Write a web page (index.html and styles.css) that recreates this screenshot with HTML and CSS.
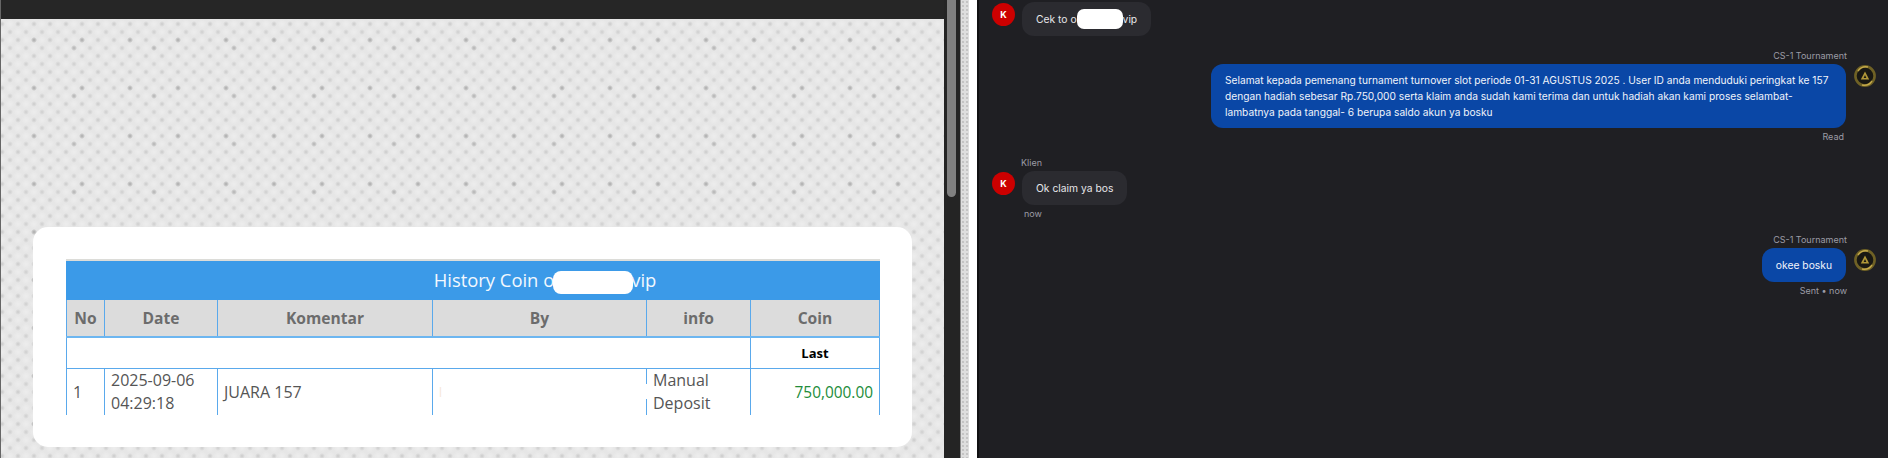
FILE: index.html
```html
<!DOCTYPE html>
<html lang="en">
<head>
  <meta charset="UTF-8" />
  <title>History Coin</title>
  <link rel="stylesheet" href="styles.css">
</head>
<body>
  <div class="page">
    <section class="left-pane">
      <div class="topbar"></div>
      <div class="card">
        <div class="table-wrap">
          <table class="coin-table">
            <colgroup>
              <col class="col-no"><col class="col-date"><col class="col-comment">
              <col class="col-by"><col class="col-info"><col class="col-coin">
            </colgroup>
            <tr>
              <th colspan="6" class="title">History Coin o<span class="redact redact-title"></span>vip</th>
            </tr>
            <tr class="head">
              <th>No</th><th>Date</th><th>Komentar</th><th>By</th><th>info</th><th>Coin</th>
            </tr>
            <tr class="sub">
              <td colspan="5"></td>
              <td class="last">Last</td>
            </tr>
            <tr class="data">
              <td>1</td>
              <td>2025-09-06 04:29:18</td>
              <td>JUARA 157</td>
              <td><span class="faint">l</span></td>
              <td class="info">Manual Deposit<span class="line-gap"></span></td>
              <td class="coin">750,000.00</td>
            </tr>
          </table>
        </div>
      </div>
    </section>

    <div class="gutter"><div class="thumb"></div></div>
    <div class="strip"></div>
    <div class="white-band"></div>

    <section class="chat">
      <div class="msg first">
        <div class="msg-row">
          <div class="avatar">K</div>
          <div class="bubble">Cek to o<span class="redact redact-chat"></span>vip</div>
        </div>
      </div>

      <div class="msg out">
        <div class="name">CS-1 Tournament</div>
        <div class="msg-row">
          <div class="bubble long">Selamat kepada pemenang turnament turnover slot periode 01-31 AGUSTUS 2025 . User ID anda menduduki peringkat ke 157 dengan hadiah sebesar Rp.750,000 serta klaim anda sudah kami terima dan untuk hadiah akan kami proses selambat-lambatnya pada tanggal- 6 berupa saldo akun ya bosku</div>
          <svg class="agent" viewBox="0 0 22 22">
            <circle cx="11" cy="11" r="9.6" fill="#191813" stroke="#6f6125" stroke-width="2.6"/>
            <path d="M4 6 A9.6 9.6 0 0 1 14 2" fill="none" stroke="#c4a94a" stroke-width="1.4"/>
            <path d="M18 16 A9.6 9.6 0 0 1 8 20" fill="none" stroke="#c4a94a" stroke-width="1.4"/>
            <path d="M11 6.4 L15.2 14.4 H6.8 Z" fill="#b09738"/>
            <path d="M11 10 L12.4 13 H9.6 Z" fill="#1d1b13"/>
          </svg>
        </div>
        <div class="status read">Read</div>
      </div>

      <div class="msg">
        <div class="name">Klien</div>
        <div class="msg-row">
          <div class="avatar">K</div>
          <div class="bubble">Ok claim ya bos</div>
        </div>
        <div class="status">now</div>
      </div>

      <div class="msg out">
        <div class="name">CS-1 Tournament</div>
        <div class="msg-row">
          <div class="bubble">okee bosku</div>
          <svg class="agent" viewBox="0 0 22 22">
            <circle cx="11" cy="11" r="9.6" fill="#191813" stroke="#6f6125" stroke-width="2.6"/>
            <path d="M4 6 A9.6 9.6 0 0 1 14 2" fill="none" stroke="#c4a94a" stroke-width="1.4"/>
            <path d="M18 16 A9.6 9.6 0 0 1 8 20" fill="none" stroke="#c4a94a" stroke-width="1.4"/>
            <path d="M11 6.4 L15.2 14.4 H6.8 Z" fill="#b09738"/>
            <path d="M11 10 L12.4 13 H9.6 Z" fill="#1d1b13"/>
          </svg>
        </div>
        <div class="status">Sent &bull; now</div>
      </div>
    </section>
  </div>
</body>
</html>
```

FILE: styles.css
```css
html, body {
  margin: 0;
  height: 458px;
  overflow: hidden;
  background: #1f1f23;
}

.page {
  display: flex;
  height: 458px;
}

.left-pane {
  width: 943px;
  flex: none;
  border-left: 1px solid #666;
  background-color: #e6e6e6;
  background-image:
    radial-gradient(circle, #adadad 0, rgba(173,173,173,0) 3px),
    radial-gradient(circle, #b4b4b4 0, rgba(180,180,180,0) 3px),
    radial-gradient(circle, #cacaca 0, rgba(202,202,202,0) 3px),
    radial-gradient(circle, #cecece 0, rgba(206,206,206,0) 3px),
    radial-gradient(circle, rgba(255,255,255,0.3) 0, rgba(255,255,255,0) 5px),
    radial-gradient(circle, rgba(255,255,255,0.3) 0, rgba(255,255,255,0) 5px);
  background-size: 48px 48px, 80px 48px, 16px 16px, 16px 16px, 16px 16px, 16px 16px;
  background-position: 9px 16px, 33px 24px, 9px 16px, 1px 24px, 1px 16px, 9px 24px;
}

.topbar {
  height: 19px;
  background: #262626;
}

.card {
  width: 814px;
  height: 188px;
  margin: 208px 0 0 32px;
  padding: 32px 32px 0 33px;
  background: white;
  border-radius: 15px;
}

.table-wrap {
  height: 156px;
  overflow: hidden;
  border-top: 2px solid #dcdcd8;
  box-sizing: border-box;
  position: relative;
}

.coin-table {
  width: 813px;
  table-layout: fixed;
  border-collapse: collapse;
  font-family: "Open Sans", sans-serif;
  font-size: 16px;
  color: #555;
}

.col-no { width: 38px; }
.col-date { width: 113px; }
.col-comment { width: 215px; }
.col-by { width: 214px; }
.col-info { width: 104px; }
.col-coin { width: 129px; }

.coin-table th, .coin-table td {
  border: 1px solid #5aa9ec;
  padding: 0 6px;
}

.title {
  height: 37px;
  padding-left: 150px !important;
  background: #3b9ae8;
  border-color: #3b9ae8 !important;
  color: #f2f8fe;
  font-size: 18.4px;
  font-weight: 400;
  text-align: center;
}

.head th {
  height: 36px;
  background: #dcdcdc;
  color: #6c6c6c;
  font-size: 15.6px;
  font-weight: 700;
  border-bottom: 2px solid #6db6f0;
}

.sub td {
  height: 30px;
}

.last {
  text-align: center;
  font-size: 13px;
  font-weight: 700;
  color: black;
}

.data td {
  height: 46px;
  line-height: 23px;
}

.faint {
  color: #f6e8da;
  font-size: 12px;
}

.info {
  position: relative;
}

.line-gap {
  position: absolute;
  left: -2px;
  top: 15px;
  width: 4px;
  height: 15px;
  background: white;
}

.coin {
  text-align: right;
  color: #218c3a;
  font-size: 15.4px;
}

.redact {
  display: inline-block;
  background: white;
  vertical-align: middle;
}

.redact-title {
  width: 80px;
  height: 23px;
  margin: 0 -2px 0 -1px;
  border-radius: 8px;
}

.redact-chat {
  width: 46px;
  height: 20px;
  border-radius: 7px;
}

.gutter {
  width: 13px;
  flex: none;
  padding-left: 3px;
  background: #242424;
}

.thumb {
  width: 9px;
  height: 197px;
  background: #808080;
  border-radius: 0 0 5px 5px;
}

.strip {
  width: 8px;
  flex: none;
  border-left: 1px solid #8a8a8a;
  background-color: #dedede;
  background-image: radial-gradient(circle, #a9a9a9 0, rgba(169,169,169,0) 1.4px);
  background-size: 4px 4px;
}

.white-band {
  width: 8px;
  flex: none;
  background: white;
  border-right: 2px solid #101012;
}

.chat {
  flex: 1;
  min-width: 0;
  display: flex;
  flex-direction: column;
  font-family: Inter, sans-serif;
  font-size: 10.3px;
  color: #e6e6ea;
  background: #1f1f23;
}

.msg {
  margin-top: 14px;
  padding-left: 13px;
}

.msg.first {
  margin-top: 2px;
}

.msg-row {
  display: flex;
  align-items: flex-start;
  gap: 7px;
}

.avatar {
  width: 23px;
  height: 23px;
  margin-top: 1px;
  flex: none;
  border-radius: 50%;
  background: #cc0000;
  color: white;
  font-size: 9px;
  font-weight: 700;
  line-height: 23px;
  text-align: center;
}

.bubble {
  min-height: 34px;
  box-sizing: border-box;
  display: flex;
  align-items: center;
  padding: 0 14px;
  background: #2b2b30;
  border-radius: 12px;
  line-height: 16px;
  white-space: pre;
}

.name, .status {
  height: 12px;
  padding-left: 29px;
  color: #9c9ca6;
  font-size: 9px;
  line-height: 12px;
}

.name {
  margin-bottom: 2px;
}

.status {
  margin-top: 3px;
  padding-left: 32px;
}

.msg.out {
  padding: 0 12px 0 0;
  text-align: right;
}

.msg.out .msg-row {
  justify-content: flex-end;
  gap: 8px;
}

.msg.out .bubble {
  background: #0a47a6;
  color: #f1f4fb;
}

.msg.out .bubble.long {
  display: block;
  width: 635px;
  padding: 8px 14px;
  font-size: 10.2px;
  text-align: left;
  white-space: normal;
}

.msg.out .name, .msg.out .status {
  padding: 0 29px 0 0;
}

.msg.out .status.read {
  padding-right: 32px;
}

.agent {
  width: 22px;
  height: 22px;
  margin-top: 1px;
  flex: none;
  filter: blur(0.4px);
}
```
